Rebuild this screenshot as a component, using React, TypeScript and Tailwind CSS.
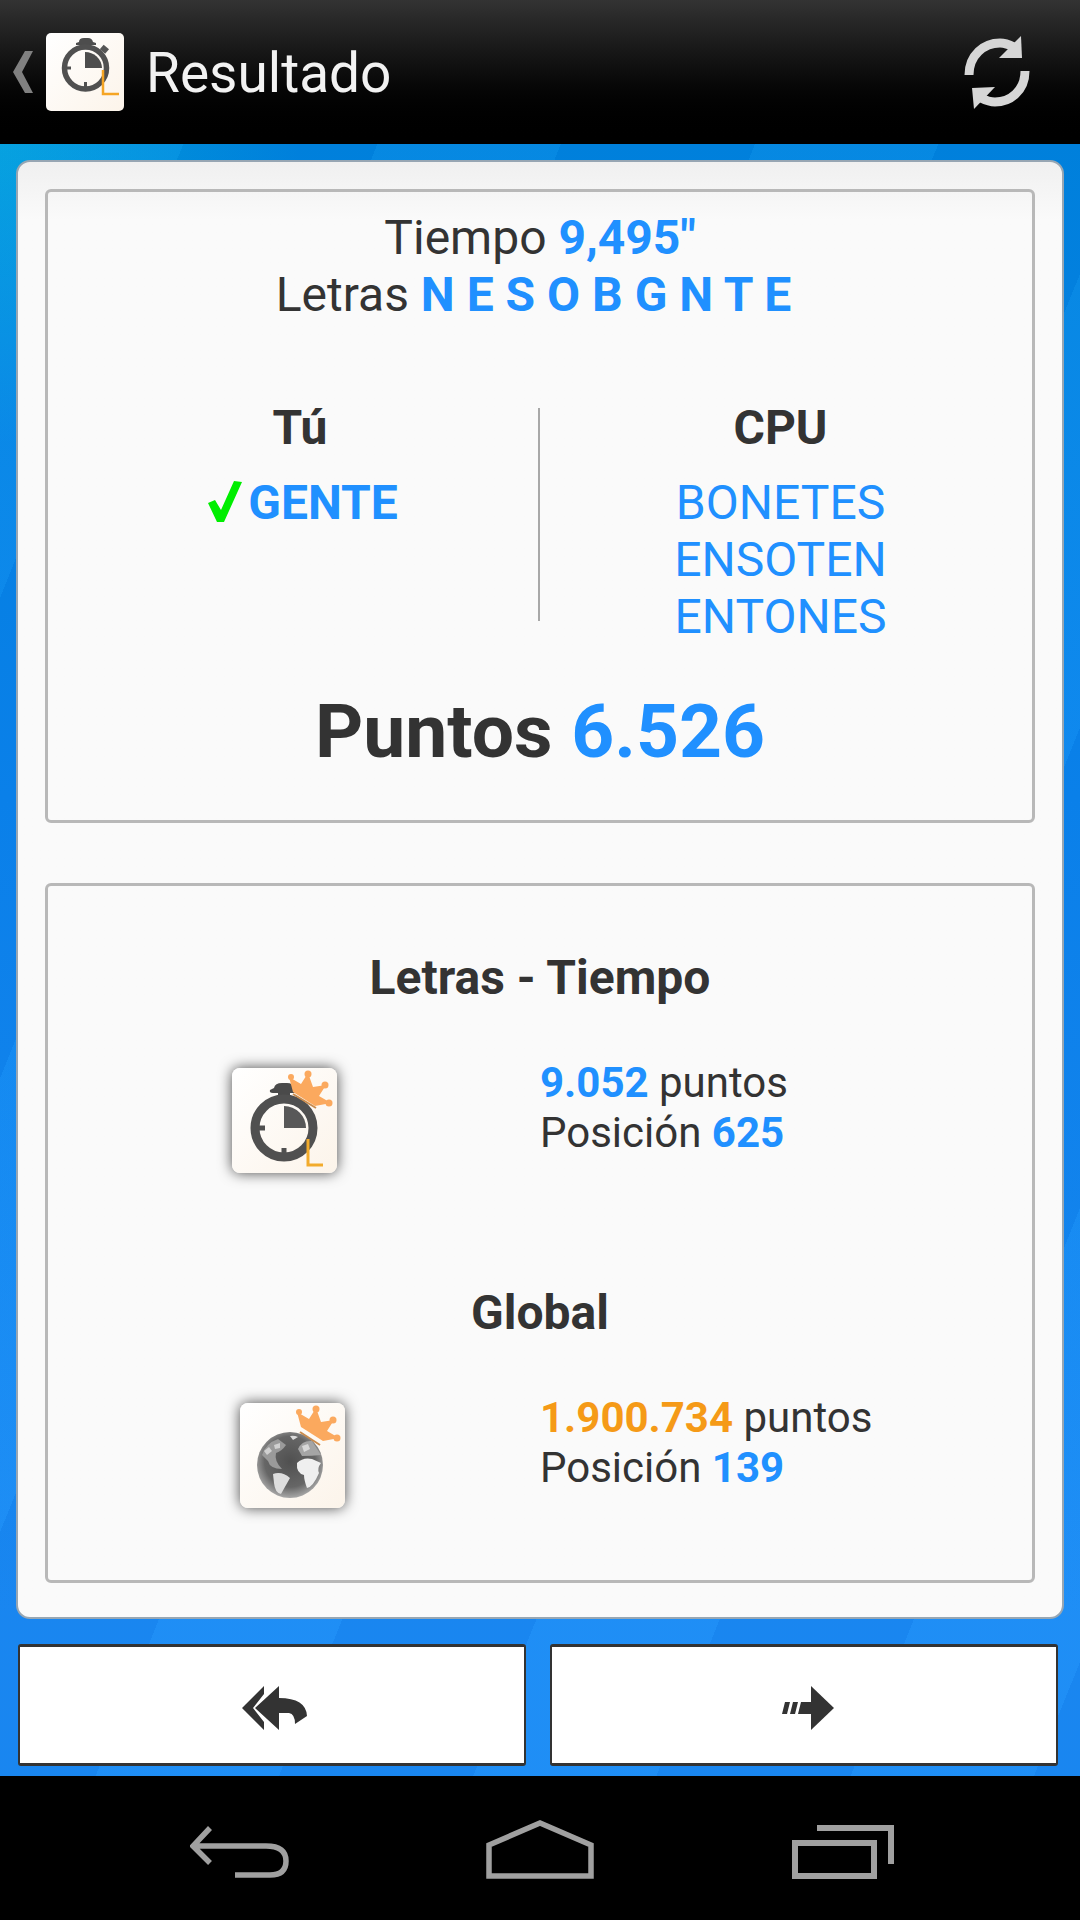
const font = { fontFamily: "Roboto, sans-serif" };

function RefreshIcon() {
  return (
    <svg width="75" height="82" viewBox="0 0 75 82" className="shrink-0">
      <path d="M9 44 C9 24 24 12 40 12 C46 12 50 14 54 16" fill="none" stroke="#d6d6d6" strokeWidth="9" />
      <path d="M61 5 L62 27 L39 27 Z" fill="#d6d6d6" />
      <path d="M65 40 C65 60 50 71 35 71 C29 71 25 69 21 67" fill="none" stroke="#d6d6d6" strokeWidth="9" />
      <path d="M14 78 L12 57 L35 56 Z" fill="#d6d6d6" />
    </svg>
  );
}

function AppIcon() {
  return (
    <svg width="78" height="78" viewBox="0 0 78 78" className="shrink-0">
      <defs>
        <linearGradient id="appBg" x1="0" y1="0" x2="1" y2="1">
          <stop offset="0" stopColor="#ffffff" />
          <stop offset="1" stopColor="#fcf4ea" />
        </linearGradient>
      </defs>
      <rect width="78" height="78" rx="5" fill="url(#appBg)" />
      <path d="M33 9 Q33 5 38 5 L42 5 Q46 5 47 9 L50 10 L50 12 L30 12 L30 10 Z" fill="#4d4d4d" />
      <rect x="36" y="11" width="7" height="4" fill="#4d4d4d" />
      <rect x="55" y="13" width="7" height="6" transform="rotate(40 58 16)" fill="#555" />
      <circle cx="39.5" cy="35" r="21" fill="none" stroke="#505050" strokeWidth="5.5" />
      <path d="M39 35 V19 A17 17 0 0 1 56 35 Z" fill="#4d4d4d" />
      <path d="M19 35 H25 M39.5 49 V54" stroke="#505050" strokeWidth="3" />
      <path d="M57 37 V61 H73" fill="none" stroke="#f5a524" strokeWidth="2.5" />
    </svg>
  );
}

function Crown() {
  return (
    <g fill="#fba95e">
      <path d="M61 24 L57 9 L69 16 L76 5 L81 19 L94 17 L87 28 L99 35 L83 38 Z" />
      <circle cx="59" cy="9" r="3" />
      <circle cx="76" cy="6" r="3.5" />
      <circle cx="93" cy="17" r="3.5" />
      <circle cx="97" cy="35" r="3.5" />
    </g>
  );
}

function WatchRank() {
  return (
    <svg width="105" height="105" viewBox="0 0 105 105" className="block">
      <defs>
        <linearGradient id="rankBg" x1="0" y1="0" x2="1" y2="1">
          <stop offset="0" stopColor="#ffffff" />
          <stop offset="1" stopColor="#fcf4ea" />
        </linearGradient>
      </defs>
      <rect width="105" height="105" rx="8" fill="url(#rankBg)" />
      <path d="M42 20 Q43 15 50 15 L55 15 Q61 15 62 20 L66 22 Q67 25 64 25 L41 25 Q37 25 38 22 Z" fill="#4a4a4a" />
      <rect x="46" y="24" width="12" height="6" fill="#4a4a4a" />
      <circle cx="52" cy="60" r="29" fill="none" stroke="#505050" strokeWidth="9" />
      <path d="M52 60 V38 A22 22 0 0 1 74 60 Z" fill="#585858" />
      <path d="M27 60 H33 M52 80 V85" stroke="#505050" strokeWidth="5" />
      <path d="M76 71 V97 H91" fill="none" stroke="#f2ab2c" strokeWidth="3" />
      <Crown />
      <path d="M61 26 L84 40" stroke="#c98b4d" strokeWidth="2" />
    </svg>
  );
}

function GlobeRank() {
  return (
    <svg width="105" height="105" viewBox="0 0 105 105" className="block">
      <defs>
        <linearGradient id="globeBg" x1="0" y1="0" x2="1" y2="1">
          <stop offset="0" stopColor="#ffffff" />
          <stop offset="1" stopColor="#fcf4ea" />
        </linearGradient>
        <radialGradient id="ocean" cx="0.5" cy="0.45" r="0.55">
          <stop offset="0" stopColor="#505050" />
          <stop offset="0.7" stopColor="#666666" />
          <stop offset="1" stopColor="#a8a8a8" />
        </radialGradient>
      </defs>
      <rect width="105" height="105" rx="8" fill="url(#globeBg)" />
      <circle cx="50" cy="62" r="33" fill="url(#ocean)" />
      <path d="M57 60 Q63 54 72 56 L81 60 Q77 65 79 70 Q73 84 67 85 Q64 77 64 72 Q56 70 57 60 Z" fill="#efefef" />
      <path d="M33 71 Q42 68 50 75 Q46 82 41 91 Q35 90 34 80 Z" fill="#dedede" />
      <path d="M22 52 Q26 40 38 36 L46 42 Q42 48 36 50 Q34 58 42 66 Q30 66 28 58 Z" fill="#9a9a9a" />
      <path d="M24 48 L29 44 L32 48 L27 52 Z M34 42 L40 40 L40 45 L35 46 Z" fill="#d0d0d0" />
      <path d="M58 46 Q62 37 72 38 L81 52 Q72 53 62 53 Z" fill="#a5a5a5" />
      <path d="M62 43 L68 41 L70 46 L64 49 Z" fill="#d8d8d8" />
      <path d="M50 33 Q54 32 58 34 L53 37 Z" fill="#dcdcdc" />
      <Crown />
      <path d="M60 29 L80 42" stroke="#c98b4d" strokeWidth="2" />
    </svg>
  );
}

function ReplyIcon() {
  return (
    <svg width="65" height="44" viewBox="0 0 65 44">
      <path d="M22 0 L0 22 L22 44 L22 36 L11 22 L22 8 Z" fill="#333" />
      <path d="M37 0 L13 22 L37 44 L37 27 L47 27 Q53 28 53 38 L65 30 Q64 12 37 12 Z" fill="#333" />
    </svg>
  );
}

function NextIcon() {
  return (
    <svg width="52" height="44" viewBox="0 0 52 44">
      <path d="M29 0 L52 22 L29 44 Z" fill="#333" />
      <path d="M3 16 H8 L5 28 H0 Z M11 16 H16 L13 28 H8 Z M19 16 H30 V28 H16 Z" fill="#333" />
    </svg>
  );
}

function Card({ children, className }: { children: React.ReactNode; className: string }) {
  return <div className={"rounded-[6px] border-[3px] border-[#b8b8b8] " + className}>{children}</div>;
}

function RankRow({ icon, offset, value, valueColor, position }: {
  icon: React.ReactNode;
  offset: string;
  value: string;
  valueColor: string;
  position: string;
}) {
  return (
    <div className="flex items-start">
      <div className={"w-[492px] shrink-0 pt-[19px] " + offset}>
        <div className="w-[105px] rounded-lg shadow-[0_0_14px_rgba(0,0,0,0.7)]">{icon}</div>
      </div>
      <div className="pt-[9px] text-[42px] leading-[50px] text-[#333]">
        <div>
          <span className={"font-bold " + valueColor}>{value}</span> puntos
        </div>
        <div>
          Posición <span className="font-bold text-[#2090ff]">{position}</span>
        </div>
      </div>
    </div>
  );
}

export default function App() {
  return (
    <div style={font} className="flex h-[1920px] w-[1080px] flex-col overflow-hidden bg-black">
      <header className="flex h-[144px] shrink-0 items-center bg-gradient-to-b from-[#333333] to-black pl-[13px] pr-[45px]">
        <svg width="20" height="42" viewBox="0 0 20 42" className="mr-[13px] shrink-0">
          <path d="M12 0 H20 L9 21 L20 42 H12 L0 21 Z" fill="#808080" />
        </svg>
        <AppIcon />
        <h1 className="ml-[22px] flex-1 pt-[2px] text-[55px] font-normal text-[#f2f2f2]">Resultado</h1>
        <RefreshIcon />
      </header>

      <main className="flex h-[1632px] shrink-0 flex-col bg-[repeating-linear-gradient(112deg,rgba(120,220,255,0.05)_0_170px,rgba(0,0,80,0.03)_170px_350px),radial-gradient(circle_at_0_0,rgba(0,190,220,0.45),transparent_300px),linear-gradient(to_bottom,#0084e0,#0a84ee_40%,#1a8af5_90%)] px-[16px] pt-[16px]">
        <section className="flex h-[1459px] shrink-0 flex-col rounded-[14px] border-2 border-[#97a6b3] bg-gradient-to-b from-[#f0f0f0] to-[#fafafa] to-[4%] px-[27px] pt-[27px]">
          <Card className="h-[634px] shrink-0">
            <div className="pt-[17px] text-center text-[48px] leading-[57px] text-[#333]">
              <div>
                Tiempo <span className="font-bold text-[#2090ff]">9,495"</span>
              </div>
              <div className="pr-[13px]">
                Letras <span className="font-bold text-[#2090ff]">N E S O B G N T E</span>
              </div>
            </div>

            <div className="mt-[85px] flex h-[213px]">
              <div className="w-[492px] shrink-0 border-r-2 border-[#a8a8a8] text-center">
                <div className="pl-[14px] text-[48px] font-bold leading-[40px] text-[#333]">Tú</div>
                <div className="mt-[32px] flex items-start justify-center pl-[20px]">
                  <svg width="34" height="41" viewBox="0 0 34 41" className="mr-[6px] mt-[1px] shrink-0">
                    <path d="M0 22 L7 19 L13 29 L26 0 L34 1 L16 41 L9 41 Z" fill="#00ee00" />
                  </svg>
                  <span className="text-[48px] font-bold leading-[46px] text-[#2090ff]">GENTE</span>
                </div>
              </div>
              <div className="flex-1 pr-[11px] text-center">
                <div className="text-[48px] font-bold leading-[40px] text-[#333]">CPU</div>
                <div className="mt-[26px] text-[48px] leading-[57px] text-[#2090ff]">
                  <div>BONETES</div>
                  <div>ENSOTEN</div>
                  <div>ENTONES</div>
                </div>
              </div>
            </div>

            <div className="mt-[68px] text-center text-[75px] font-bold leading-[84px] text-[#333]">
              Puntos <span className="text-[#2090ff]">6.526</span>
            </div>
          </Card>

          <Card className="mt-[60px] h-[700px] shrink-0">
            <h2 className="pt-[64px] text-center text-[48px] font-bold leading-[56px] text-[#333]">Letras - Tiempo</h2>
            <div className="mt-[43px]">
              <RankRow
                icon={<WatchRank />}
                offset="pl-[184px]"
                value="9.052"
                valueColor="text-[#2090ff]"
                position="625"
              />
            </div>
            <h2 className="mt-[112px] text-center text-[48px] font-bold leading-[56px] text-[#333]">Global</h2>
            <div className="mt-[43px]">
              <RankRow
                icon={<GlobeRank />}
                offset="pl-[192px]"
                value="1.900.734"
                valueColor="text-[#f59a17]"
                position="139"
              />
            </div>
          </Card>
        </section>

        <nav className="mt-[25px] flex gap-[24px] px-[2px]">
          <button className="flex h-[122px] w-[508px] items-center justify-center rounded-[3px] border-x-2 border-y-[3px] border-[#333] bg-white pl-[5px] pt-[6px]">
            <ReplyIcon />
          </button>
          <button className="flex h-[122px] w-[508px] items-center justify-center rounded-[3px] border-x-2 border-y-[3px] border-[#333] bg-white pl-[7px] pt-[6px]">
            <NextIcon />
          </button>
        </nav>
      </main>

      <footer className="flex h-[144px] shrink-0 items-start pt-[49px]">
        <div className="ml-[190px]">
          <svg width="100" height="54" viewBox="0 0 100 54">
            <path d="M20 3 L3 21 L20 38 M3 21 H76 Q96 21 96 36 Q96 50 80 50 H45" fill="none" stroke="#a0a0a0" strokeWidth="5.5" />
          </svg>
        </div>
        <div className="-mt-[6px] ml-[196px]">
          <svg width="108" height="60" viewBox="0 0 108 60">
            <path d="M3 57 V26 L54 4 L105 26 V57 Z" fill="none" stroke="#a0a0a0" strokeWidth="5.5" />
          </svg>
        </div>
        <div className="ml-[198px]">
          <svg width="102" height="54" viewBox="0 0 102 54">
            <path d="M25 3 H99 V39" fill="none" stroke="#a0a0a0" strokeWidth="6" />
            <rect x="3" y="18" width="79" height="33" fill="none" stroke="#a0a0a0" strokeWidth="6" />
          </svg>
        </div>
      </footer>
    </div>
  );
}
